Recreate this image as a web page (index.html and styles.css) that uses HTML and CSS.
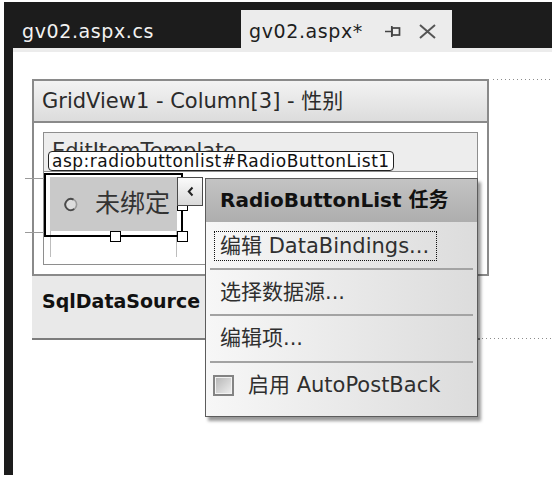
FILE: index.html
```html
<!DOCTYPE html>
<html>
<head>
<meta charset="utf-8">
<link rel="stylesheet" href="styles.css">
</head>
<body>
<div class="frame">
  <div class="tabs">
    <div class="tab tab-inactive">gv02.aspx.cs</div>
    <div class="tab tab-active">
      <span class="tab-title">gv02.aspx*</span>
      <svg class="pin" width="16" height="13" viewBox="0 0 16 13"><path d="M0 6.5H6 M6.8 1V12" stroke="#444" stroke-width="1.7" fill="none"/><rect x="7" y="3" width="7.5" height="7" fill="none" stroke="#444" stroke-width="1.7"/></svg>
      <svg class="close" width="19" height="15" viewBox="0 0 19 15"><path d="M2 1L17 14 M17 1L2 14" stroke="#555" stroke-width="2" fill="none"/></svg>
    </div>
  </div>
  <div class="content">
    <div class="surface">
      <div class="row row-top">
        <div class="gv">
          <div class="gv-head">GridView1 - Column[3] - 性别</div>
          <div class="gv-body">
            <div class="tpl">
              <div class="tpl-head">EditItemTemplate</div>
              <div class="tpl-body">
                <div class="rbl"><svg class="radio" width="14" height="15" viewBox="0 0 14 15"><circle cx="7" cy="7.5" r="5.6" fill="#dcdcdc" stroke="#9a9a9a" stroke-width="1.6"/><path d="M9.5 2.6A5.6 5.6 0 1 0 10.2 12.1" fill="none" stroke="#4a4a4a" stroke-width="1.8"/></svg><span class="rbl-text">未绑定</span></div>
                <div class="cell"></div>
              </div>
            </div>
          </div>
        </div>
        <div class="dots"></div>
      </div>
      <div class="row row-bottom">
        <div class="sqlds">SqlDataSource</div>
        <div class="dots"></div>
      </div>
    </div>

    <div class="guide guide-a"></div>
    <div class="guide guide-b"></div>
    <div class="tag">asp:radiobuttonlist#RadioButtonList1</div>
    <div class="sel"></div>
    <div class="handle h-bm"></div>
    <div class="handle h-br"></div>
    <div class="handle h-rm"></div>
    <div class="smart"><svg width="7" height="11" viewBox="0 0 7 11"><path d="M5.5 1.5L1.8 5.5L5.5 9.5" stroke="#222" stroke-width="2" fill="none"/></svg></div>

    <div class="menu">
      <div class="menu-head">RadioButtonList 任务</div>
      <div class="mi mi-1"><div class="focus">编辑 DataBindings...</div></div>
      <div class="sep"></div>
      <div class="mi mi-2">选择数据源...</div>
      <div class="sep"></div>
      <div class="mi mi-3">编辑项...</div>
      <div class="sep"></div>
      <div class="mi mi-4"><span class="check"></span><span class="check-label">启用 AutoPostBack</span></div>
    </div>
  </div>
</div>
</body>
</html>
```

FILE: styles.css
```css
html, body {
  margin: 0;
  padding: 0;
  background: #ffffff;
}
body {
  font-family: "DejaVu Sans", "Noto Sans CJK SC", sans-serif;
  color: #222;
}
.frame {
  margin: 2px 0 0 4px;
  height: 473px;
  background: #1c1c1c;
  display: flex;
  flex-direction: column;
}
.tabs {
  height: 46px;
  flex-shrink: 0;
  display: flex;
  align-items: flex-end;
}
.tab {
  height: 38px;
  box-sizing: border-box;
  font-size: 19px;
  letter-spacing: 0.6px;
  line-height: 34px;
  padding-top: 4px;
  white-space: nowrap;
}
.tab-inactive {
  width: 237px;
  padding-left: 18px;
  color: #f2f2f2;
}
.tab-active {
  width: 211px;
  padding-left: 8px;
  background: #ececec;
  color: #1e1e1e;
  display: flex;
  align-items: flex-start;
}
.tab-title {
  width: 136px;
}
.pin {
  margin-top: 11px;
}
.close {
  margin-top: 10px;
  margin-left: 17px;
}
.content {
  flex: 1;
  margin-left: 9px;
  background: #ffffff;
  border-top: 4px solid #ececec;
  position: relative;
}
.surface {
  padding: 27px 0 0 19px;
}
.row {
  display: flex;
}
.row-top {
  align-items: flex-start;
}
.row-bottom {
  align-items: flex-end;
}
.dots {
  flex: 1;
  height: 1px;
  margin-left: 4px;
  background: repeating-linear-gradient(to right, #8c8c8c 0 1px, transparent 1px 4px);
}
.row-bottom .dots {
  margin-left: 2px;
  margin-bottom: 1px;
}
.gv {
  width: 457px;
  box-sizing: border-box;
  border: 2px solid #8a8a8a;
}
.gv-head {
  height: 40px;
  line-height: 40px;
  padding-left: 8px;
  font-size: 21px;
  color: #2a2a2a;
  background: linear-gradient(#f3f3f3, #dcdcdc);
  border-bottom: 2px solid #8a8a8a;
  white-space: nowrap;
}
.gv-body {
  padding: 9px;
}
.tpl {
  border: 1px solid #8e8e8e;
}
.tpl-head {
  height: 38px;
  line-height: 36px;
  padding-left: 8px;
  font-size: 21px;
  color: #333;
  background: #ededed;
  border-bottom: 1px solid #8e8e8e;
  overflow: hidden;
}
.tpl-body {
  padding: 5px 0 7px 6px;
}
.rbl {
  width: 127px;
  height: 54px;
  box-sizing: border-box;
  background: #c9c9c9;
  display: flex;
  align-items: center;
  padding-left: 14px;
}
.radio {
  flex-shrink: 0;
}
.rbl-text {
  margin-left: 17px;
  font-size: 25px;
  color: #333;
  line-height: 30px;
}
.cell {
  width: 127px;
  height: 26px;
  box-sizing: border-box;
  border-left: 1px solid #bdbdbd;
  border-right: 1px solid #bdbdbd;
}
.sqlds {
  width: 448px;
  height: 64px;
  box-sizing: border-box;
  padding: 13px 0 0 10px;
  background: #e9e9e9;
  border-bottom: 2px solid #7c7c7c;
  font-size: 19px;
  font-weight: bold;
  line-height: 24px;
  color: #111;
}
.guide {
  position: absolute;
  left: 12px;
  width: 19px;
  height: 1px;
  background: #9a9a9a;
}
.guide-a { top: 126px; }
.guide-b { top: 180px; }
.tag {
  position: absolute;
  left: 35px;
  top: 99px;
  height: 20px;
  box-sizing: border-box;
  padding: 0 3px;
  border: 1px solid #222;
  border-radius: 4px;
  background: #ffffff;
  font-size: 17px;
  letter-spacing: 0.5px;
  line-height: 18px;
  color: #111;
  white-space: nowrap;
}
.sel {
  position: absolute;
  left: 31px;
  top: 121px;
  width: 139px;
  height: 64px;
  box-sizing: border-box;
  border: 2px solid #000;
}
.handle {
  position: absolute;
  width: 11px;
  height: 11px;
  box-sizing: border-box;
  border: 1.5px solid #000;
  background: #fff;
}
.h-bm { left: 97px; top: 179px; }
.h-br { left: 164px; top: 179px; }
.h-rm { left: 164px; top: 148px; }
.smart {
  position: absolute;
  left: 164px;
  top: 125px;
  width: 26px;
  height: 29px;
  box-sizing: border-box;
  border: 1px solid #4a4a4a;
  background: linear-gradient(#fbfbfb, #d9d9d9);
  display: flex;
  align-items: center;
  justify-content: center;
}
.menu {
  position: absolute;
  left: 192px;
  top: 126px;
  width: 273px;
  height: 239px;
  box-sizing: border-box;
  border: 1px solid #5c5c5c;
  background: linear-gradient(to right, #f7f7f7, #dcdcdc);
  box-shadow: 3px 4px 3px rgba(0, 0, 0, 0.4);
  display: flex;
  flex-direction: column;
}
.menu-head {
  height: 43px;
  line-height: 43px;
  padding-left: 14px;
  font-size: 20px;
  font-weight: bold;
  color: #111;
  background: linear-gradient(#c3c3c3, #aeaeae);
  white-space: nowrap;
}
.mi {
  font-size: 21px;
  color: #2f2f2f;
  white-space: nowrap;
  padding-left: 14px;
}
.mi-1 {
  height: 46px;
  box-sizing: border-box;
  padding: 9px 0 0 8px;
}
.focus {
  width: 223px;
  height: 30px;
  box-sizing: border-box;
  border: 1px dotted #111;
  padding-left: 5px;
  line-height: 28px;
}
.sep {
  height: 2px;
  margin: 0 4px;
  background: #a3a3a3;
}
.mi-2 {
  height: 44px;
  line-height: 44px;
}
.mi-3 {
  height: 45px;
  line-height: 45px;
}
.mi-4 {
  flex: 1;
  display: flex;
  align-items: flex-start;
  padding: 12px 0 0 7px;
}
.check {
  width: 21px;
  height: 21px;
  box-sizing: border-box;
  border: 2px solid #838383;
  box-shadow: inset 0 0 0 1px #f2f2f2;
  background: linear-gradient(135deg, #b4b4b4, #f0f0f0);
}
.check-label {
  margin-left: 14px;
  line-height: 21px;
}
```
